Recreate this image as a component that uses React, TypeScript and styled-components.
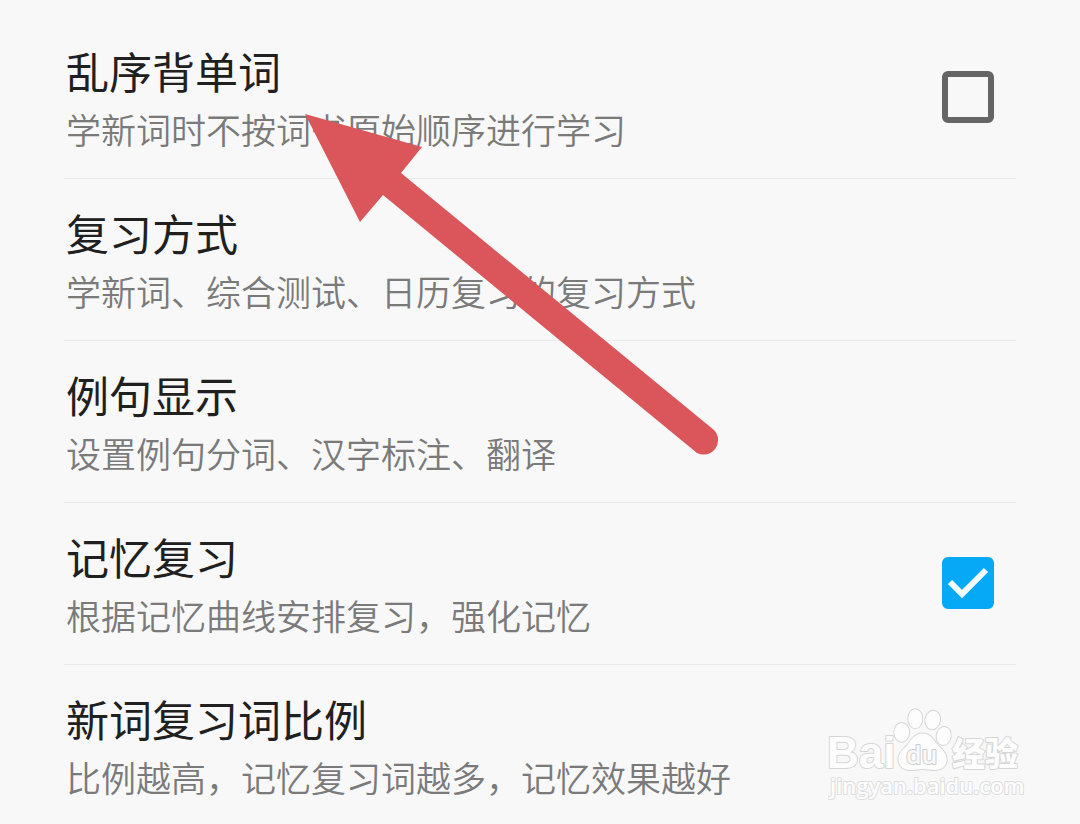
import React, { useState } from 'react';
import styled, { createGlobalStyle, css } from 'styled-components';

const GlobalStyle = createGlobalStyle`
  *, *::before, *::after { box-sizing: border-box; }
  body {
    margin: 0;
    background: #f8f8f8;
    font-family: 'Noto Sans CJK SC', sans-serif;
  }
`;

const Page = styled.div`
  position: relative;
  min-height: 100vh;
  overflow: hidden;
`;

const SettingsList = styled.ul`
  margin: 0;
  padding: 17px 64px 0;
  list-style: none;
`;

const rowStyle = css`
  display: flex;
  align-items: center;
  justify-content: space-between;
  width: 100%;
  padding: 24px 22px 24px 2px;
  border: none;
  background: none;
  font-family: inherit;
  text-align: left;
  cursor: pointer;
`;

const CheckRow = styled.label`
  ${rowStyle}
`;

const LinkRow = styled.button`
  ${rowStyle}
`;

const SettingsItem = styled.li`
  padding-bottom: 1px;
  border-bottom: 1px solid #e9eaeb;

  &:last-child {
    border-bottom: none;
  }

  &:last-child > * {
    padding-bottom: 16px;
  }
`;

const RowText = styled.span`
  display: flex;
  flex-direction: column;
  gap: 6px;
`;

const RowTitle = styled.span`
  font-size: 43px;
  line-height: 58px;
  color: #202020;
`;

const RowNote = styled.span`
  font-size: 35px;
  line-height: 48px;
  font-weight: 350;
  color: #7a7a7a;
`;

const CheckBoxWrap = styled.span`
  display: grid;
  flex: none;

  > * {
    grid-area: 1 / 1;
  }
`;

const CheckBox = styled.input`
  appearance: none;
  width: 52px;
  height: 52px;
  margin: 0;
  border: 6px solid #656565;
  border-radius: 6px;

  &:checked {
    border-color: #06a9f5;
    background: #06a9f5;
  }
`;

const CheckMark = styled.svg`
  pointer-events: none;
`;

const Arrow = styled.svg`
  position: absolute;
  top: 0;
  left: 0;
  pointer-events: none;
`;

const Watermark = styled.svg`
  position: absolute;
  right: 50px;
  bottom: 20px;
  pointer-events: none;
`;

type Setting = { title: string; note: string; checked?: boolean };

const settings: Setting[] = [
  { title: '乱序背单词', note: '学新词时不按词书原始顺序进行学习', checked: false },
  { title: '复习方式', note: '学新词、综合测试、日历复习的复习方式' },
  { title: '例句显示', note: '设置例句分词、汉字标注、翻译' },
  { title: '记忆复习', note: '根据记忆曲线安排复习，强化记忆', checked: true },
  { title: '新词复习词比例', note: '比例越高，记忆复习词越多，记忆效果越好' },
];

function SettingText({ title, note }: Setting) {
  return (
    <RowText>
      <RowTitle>{title}</RowTitle>
      <RowNote>{note}</RowNote>
    </RowText>
  );
}

function CheckSetting({ setting }: { setting: Setting }) {
  const [on, setOn] = useState(Boolean(setting.checked));
  return (
    <CheckRow>
      <SettingText {...setting} />
      <CheckBoxWrap>
        <CheckBox type="checkbox" checked={on} onChange={() => setOn(!on)} />
        {on && (
          <CheckMark width="52" height="52" viewBox="0 0 52 52" aria-hidden="true">
            <path d="M8 25 L20 37 L44 13" fill="none" stroke="#f4fdff" strokeWidth="6" />
          </CheckMark>
        )}
      </CheckBoxWrap>
    </CheckRow>
  );
}

function BaiduMark() {
  return (
    <Watermark width="202" height="104" viewBox="0 0 202 104" role="img" aria-label="Baidu 经验">
      <g fill="#fdfdfd" stroke="#d6d6d6" strokeWidth="2" paintOrder="stroke" strokeLinejoin="round">
        <text x="-1" y="68" fontFamily="Liberation Sans, sans-serif" fontWeight="700" fontSize="44">Bai</text>
        <ellipse cx="73.7" cy="32.3" rx="7.4" ry="9.4" />
        <ellipse cx="87.3" cy="18.7" rx="7" ry="9.5" />
        <ellipse cx="104.7" cy="20" rx="7.3" ry="9.3" transform="rotate(12 104.7 20)" />
        <ellipse cx="115.7" cy="36" rx="7" ry="9" transform="rotate(10 115.7 36)" />
        <path d="M94.7 33.5 C88 33.5 84 38 81 43 C77 48 70.5 52 70.5 59 C70.5 66 75 70 82 70 C87 70 90 69 94.5 69 C99 69 102 70 107 70 C114 70 119 66 118.7 59 C118.4 52 112 48 108 43 C104.5 38 101 33.5 94.7 33.5 Z" />
        <text x="78" y="64" fill="#f8f8f8" stroke="#cdcdcd" fontFamily="Open Sans, sans-serif" fontWeight="600" fontSize="25">du</text>
        <text x="124" y="66" fontFamily="Noto Sans CJK SC, sans-serif" fontWeight="900" fontSize="33">经验</text>
        <text x="2" y="94" stroke="#dedede" fontFamily="Open Sans, sans-serif" fontWeight="600" fontSize="22">jingyan.baidu.com</text>
      </g>
    </Watermark>
  );
}

export default function App() {
  return (
    <>
      <GlobalStyle />
      <Page>
        <SettingsList>
          {settings.map((s) => (
            <SettingsItem key={s.title}>
              {s.checked === undefined ? (
                <LinkRow type="button">
                  <SettingText {...s} />
                </LinkRow>
              ) : (
                <CheckSetting setting={s} />
              )}
            </SettingsItem>
          ))}
        </SettingsList>
        <Arrow width="730" height="470" viewBox="0 0 730 470" aria-hidden="true">
          <path
            d="M305 114 L422 147 L401 173 L714 430 A14.5 14.5 0 0 1 697 453 L383 195 L360 222 Z"
            fill="#da565b"
          />
        </Arrow>
        <BaiduMark />
      </Page>
    </>
  );
}
